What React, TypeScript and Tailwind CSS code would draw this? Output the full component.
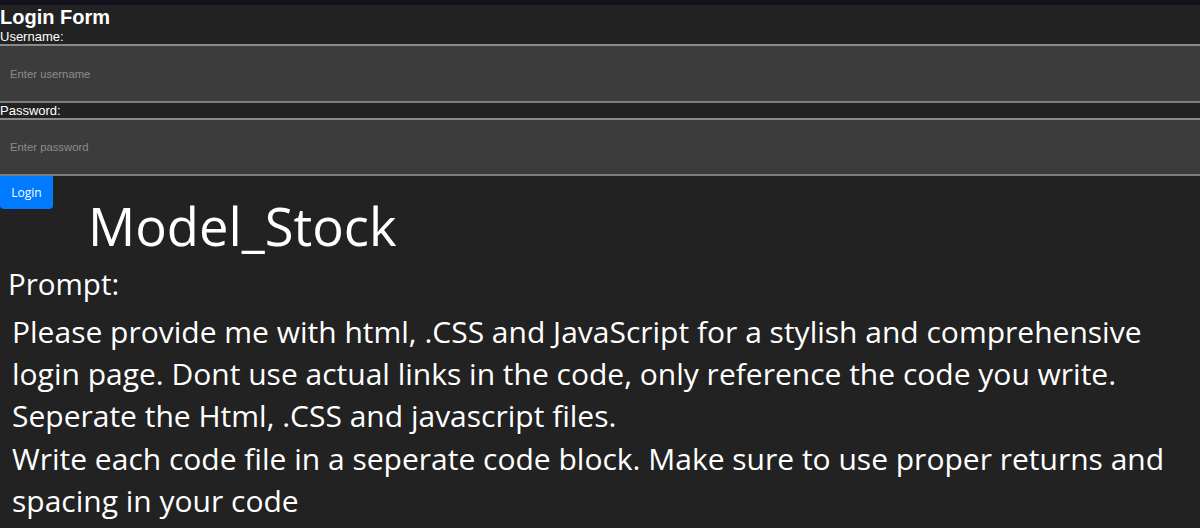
import React from 'react'

const PROMPT_LINES = [
  'Please provide me with html, .CSS and JavaScript for a stylish and comprehensive',
  'login page. Dont use actual links in the code, only reference the code you write.',
  'Seperate the Html, .CSS and javascript files.',
  'Write each code file in a seperate code block. Make sure to use proper returns and',
  'spacing in your code',
]

export default function App() {
  return (
    <div className="h-[528px] w-[1200px] overflow-hidden bg-[#222222] text-white">
      <div className="h-[5px] bg-[#14121e]" />

      <form className="flex flex-col font-['Liberation_Sans',Arial,sans-serif]">
        <h2 className="h-6 text-[20px] font-bold leading-6">Login Form</h2>
        <label htmlFor="username" className="text-[13px] leading-[15px]">
          Username:
        </label>
        <input
          id="username"
          type="text"
          placeholder="Enter username"
          className="h-[59px] w-full border-y-2 border-t-[#8a8a8a] border-b-[#7d7d7d] bg-[#3c3c3c] px-[10px] text-[11.3px] text-white outline-none placeholder:text-[#8c8c8c]"
        />
        <label htmlFor="password" className="text-[13px] leading-[15px]">
          Password:
        </label>
        <input
          id="password"
          type="password"
          placeholder="Enter password"
          className="h-[58px] w-full border-y-2 border-t-[#8a8a8a] border-b-[#7d7d7d] bg-[#3c3c3c] px-[10px] text-[11.3px] text-white outline-none placeholder:text-[#8c8c8c]"
        />
        <button
          type="button"
          className="h-[33px] w-[53px] rounded-b-[4px] bg-[#007bff] font-['Open_Sans',sans-serif] text-[12px] font-medium text-white"
        >
          Login
        </button>
      </form>

      <div className="font-['Open_Sans',sans-serif]">
        <h1 className="pl-[88px] text-[52.5px] leading-[34px]">Model_Stock</h1>
        <p className="mt-[21px] pl-2 text-[29.5px] leading-[40px]">Prompt:</p>
        <p className="mt-[7px] pl-3 text-[30px] leading-[42.2px]">
          {PROMPT_LINES.map((line) => (
            <span key={line} className="block whitespace-nowrap">
              {line}
            </span>
          ))}
        </p>
      </div>
    </div>
  )
}
